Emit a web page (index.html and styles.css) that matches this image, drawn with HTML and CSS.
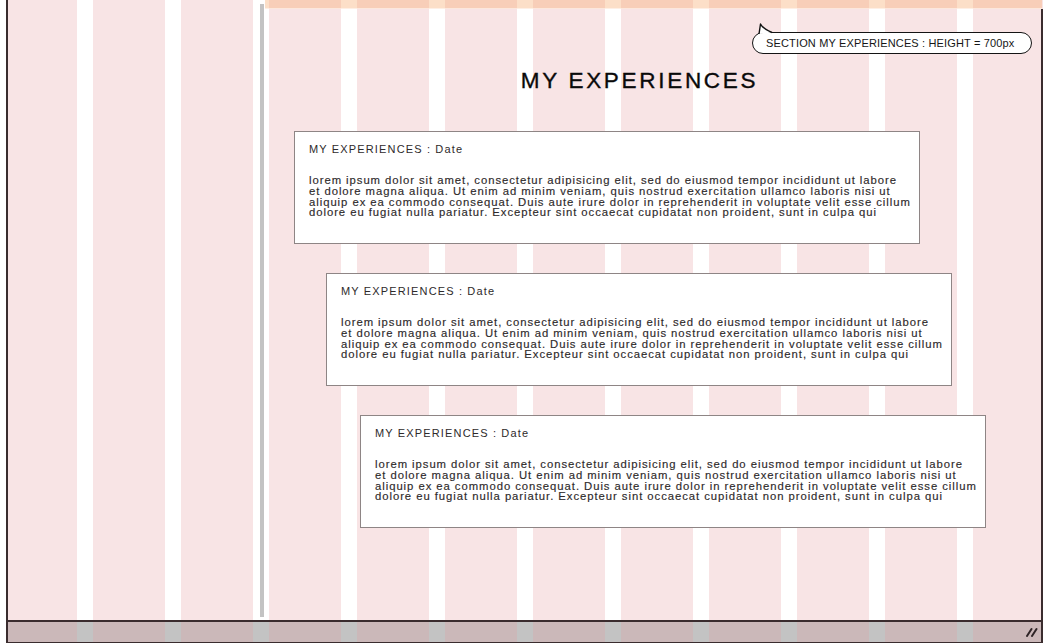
FILE: index.html
```html
<!DOCTYPE html>
<html lang="en">
<head>
<meta charset="utf-8">
<title>My Experiences – wireframe</title>
<link rel="stylesheet" href="styles.css">
</head>
<body>
<div class="window">
  <div class="viewport">
    <aside class="left-pane"></aside>
    <div class="divider"></div>
    <section class="right-pane">
      <div class="strip"></div>
      <div class="content">
        <div class="note">
          <svg class="note-tail" width="20" height="12" viewBox="0 0 20 12" aria-hidden="true">
            <path d="M3 11 L4.5 1 Q7 6 16 9.5" fill="#fff" stroke="#111" stroke-width="1.4" stroke-linejoin="round"/>
          </svg>
          <span class="note-text">SECTION MY EXPERIENCES : HEIGHT = 700px</span>
        </div>
        <h1 class="section-title">MY EXPERIENCES</h1>
        <div class="timeline">
          <article class="card">
            <h2 class="card-title">MY EXPERIENCES : Date</h2>
            <p class="card-text">lorem ipsum dolor sit amet, consectetur adipisicing elit, sed do eiusmod tempor incididunt ut labore<br>et dolore magna aliqua. Ut enim ad minim veniam, quis nostrud exercitation ullamco laboris nisi ut<br>aliquip ex ea commodo consequat. Duis aute irure dolor in reprehenderit in voluptate velit esse cillum<br>dolore eu fugiat nulla pariatur. Excepteur sint occaecat cupidatat non proident, sunt in culpa qui</p>
          </article>
          <article class="card card--2">
            <h2 class="card-title">MY EXPERIENCES : Date</h2>
            <p class="card-text">lorem ipsum dolor sit amet, consectetur adipisicing elit, sed do eiusmod tempor incididunt ut labore<br>et dolore magna aliqua. Ut enim ad minim veniam, quis nostrud exercitation ullamco laboris nisi ut<br>aliquip ex ea commodo consequat. Duis aute irure dolor in reprehenderit in voluptate velit esse cillum<br>dolore eu fugiat nulla pariatur. Excepteur sint occaecat cupidatat non proident, sunt in culpa qui</p>
          </article>
          <article class="card card--3">
            <h2 class="card-title">MY EXPERIENCES : Date</h2>
            <p class="card-text">lorem ipsum dolor sit amet, consectetur adipisicing elit, sed do eiusmod tempor incididunt ut labore<br>et dolore magna aliqua. Ut enim ad minim veniam, quis nostrud exercitation ullamco laboris nisi ut<br>aliquip ex ea commodo consequat. Duis aute irure dolor in reprehenderit in voluptate velit esse cillum<br>dolore eu fugiat nulla pariatur. Excepteur sint occaecat cupidatat non proident, sunt in culpa qui</p>
          </article>
        </div>
      </div>
    </section>
  </div>
  <footer class="statusbar">
    <svg class="grip" width="12" height="10" viewBox="0 0 12 10" aria-hidden="true">
      <path d="M1 9 L5.5 2 M6 9 L10.5 2" stroke="#2e2426" stroke-width="2" stroke-linecap="round"/>
    </svg>
  </footer>
</div>
</body>
</html>
```

FILE: styles.css
```css
html, body {
  margin: 0;
  padding: 0;
}

body {
  width: 1053px;
  height: 644px;
  overflow: hidden;
  background: #ffffff;
  font-family: "Liberation Sans", Arial, sans-serif;
  color: #111;
}

.window {
  margin-left: 6px;
  width: 1037px;
  height: 643px;
  box-sizing: border-box;
  border-left: 2px solid #3a2c2e;
  display: flex;
  flex-direction: column;
  background-image: linear-gradient(to right, #f8e4e5 0, #f8e4e5 72px, #ffffff 72px, #ffffff 88px);
  background-size: 88px 100%;
  background-position: -3px 0;
}

.viewport {
  height: 620px;
  display: flex;
}

.left-pane {
  width: 252px;
  flex: none;
}

.divider {
  width: 4px;
  flex: none;
  margin: 4px 0 3px;
  background: #c3c3c3;
}

.right-pane {
  flex: 1;
  display: flex;
  flex-direction: column;
}

.strip {
  height: 8px;
  margin-left: 1px;
  margin-right: 1px;
  background: rgba(246, 170, 110, 0.38);
  border-bottom: 1px solid rgba(255, 255, 255, 0.5);
}

.content {
  flex: 1;
  position: relative;
  border-right: 2px solid #3a2c2e;
}

.note {
  position: absolute;
  left: 488px;
  top: 23px;
  width: 280px;
  height: 22px;
  box-sizing: border-box;
  border: 1.5px solid #141414;
  border-radius: 11px;
  background: #ffffff;
  display: flex;
  align-items: center;
  padding-left: 13px;
}

.note-tail {
  position: absolute;
  left: 3px;
  top: -10px;
}

.note-text {
  font-size: 11px;
  letter-spacing: 0.15px;
  color: #161616;
  white-space: nowrap;
}

.section-title {
  margin: 59px 0 0;
  padding-right: 26px;
  text-align: center;
  font-size: 22.5px;
  line-height: 26px;
  font-weight: normal;
  letter-spacing: 2.7px;
  color: #0a0a0a;
  -webkit-text-stroke: 0.35px #0a0a0a;
}

.timeline {
  margin-top: 37px;
  padding-left: 30px;
  display: flex;
  flex-direction: column;
  align-items: flex-start;
  gap: 29px;
}

.card {
  width: 626px;
  height: 113px;
  box-sizing: border-box;
  border: 1px solid #8e8585;
  background: #ffffff;
  padding: 11px 13px 0 14px;
  color: #2e2a2b;
}

.card--2 {
  margin-left: 32px;
}

.card--3 {
  margin-left: 66px;
}

.card-title {
  margin: 0 0 19px;
  font-size: 11px;
  line-height: 13px;
  font-weight: normal;
  letter-spacing: 1.15px;
  white-space: nowrap;
}

.card-text {
  margin: 0;
  font-size: 11.3px;
  line-height: 10.8px;
  letter-spacing: 0.95px;
  white-space: nowrap;
  -webkit-text-stroke: 0.15px #2e2a2b;
}

.statusbar {
  height: 23px;
  box-sizing: border-box;
  border-top: 2px solid #3a2c2e;
  border-bottom: 1px solid #3a2c2e;
  border-right: 2px solid #3a2c2e;
  background-image: linear-gradient(to right, #cbb8b9 0, #cbb8b9 72px, #c3c3c3 72px, #c3c3c3 88px);
  background-size: 88px 100%;
  background-position: -3px 0;
  display: flex;
  justify-content: flex-end;
  align-items: center;
  padding-right: 3px;
}

.grip {
  display: block;
}
```
